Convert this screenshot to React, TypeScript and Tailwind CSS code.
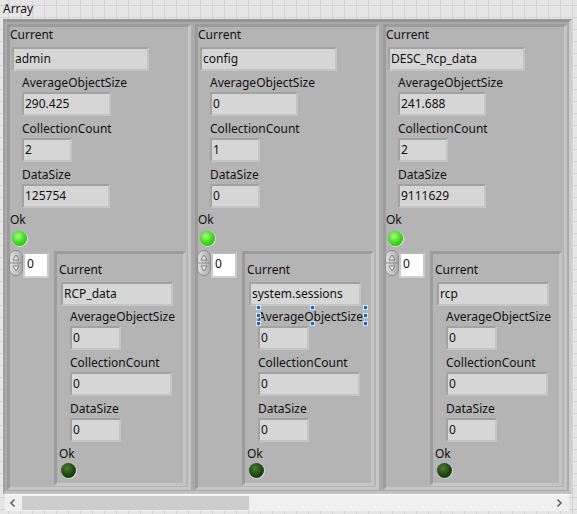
import React from "react";

type Item = { label: string; value: string; w: string };
type Col = {
  name: string;
  items: Item[];
  nested: { name: string; items: Item[] };
  selected?: boolean;
};

const cols: Col[] = [
  {
    name: "admin",
    items: [
      { label: "AverageObjectSize", value: "290.425", w: "w-[89px]" },
      { label: "CollectionCount", value: "2", w: "w-[50px]" },
      { label: "DataSize", value: "125754", w: "w-[88px]" },
    ],
    nested: {
      name: "RCP_data",
      items: [
        { label: "AverageObjectSize", value: "0", w: "w-[51px]" },
        { label: "CollectionCount", value: "0", w: "w-[102px]" },
        { label: "DataSize", value: "0", w: "w-[51px]" },
      ],
    },
  },
  {
    name: "config",
    items: [
      { label: "AverageObjectSize", value: "0", w: "w-[88px]" },
      { label: "CollectionCount", value: "1", w: "w-[50px]" },
      { label: "DataSize", value: "0", w: "w-[50px]" },
    ],
    nested: {
      name: "system.sessions",
      items: [
        { label: "AverageObjectSize", value: "0", w: "w-[51px]" },
        { label: "CollectionCount", value: "0", w: "w-[102px]" },
        { label: "DataSize", value: "0", w: "w-[51px]" },
      ],
    },
    selected: true,
  },
  {
    name: "DESC_Rcp_data",
    items: [
      { label: "AverageObjectSize", value: "241.688", w: "w-[88px]" },
      { label: "CollectionCount", value: "2", w: "w-[50px]" },
      { label: "DataSize", value: "9111629", w: "w-[88px]" },
    ],
    nested: {
      name: "rcp",
      items: [
        { label: "AverageObjectSize", value: "0", w: "w-[51px]" },
        { label: "CollectionCount", value: "0", w: "w-[102px]" },
        { label: "DataSize", value: "0", w: "w-[51px]" },
      ],
    },
  },
];

const fieldCls =
  "h-[24px] border-2 border-t-[#a2a2a2] border-l-[#a2a2a2] border-b-[#c4c4c4] border-r-[#c4c4c4] bg-[#d6d6d6] pl-[1px] text-[12px] leading-[20px] text-[#111] whitespace-nowrap overflow-hidden";

function Label({ text, className = "" }: { text: string; className?: string }) {
  return (
    <div className={`h-[16px] text-[12px] leading-[16px] text-[#111] whitespace-nowrap ${className}`}>
      {text}
    </div>
  );
}

function Handle({ className }: { className: string }) {
  return (
    <div
      className={`absolute w-[5px] h-[5px] bg-[#1162cc] border border-[#d8e8ff] ${className}`}
    />
  );
}

function Led({ on, className = "" }: { on: boolean; className?: string }) {
  return (
    <div
      className={`w-[17px] h-[17px] rounded-full p-[1px] bg-[linear-gradient(135deg,#9a9a9a,#f2f2f2)] ${className}`}
    >
      <div
        className={`w-full h-full rounded-full ${
          on
            ? "bg-[radial-gradient(circle_at_40%_35%,#a8ff86,#44e020_45%,#1f9a14)]"
            : "bg-[radial-gradient(circle_at_40%_35%,#4a7a34,#1f4512_55%,#0e2607)]"
        }`}
      />
    </div>
  );
}

function Stepper() {
  return (
    <svg width="14" height="26" viewBox="0 0 14 26" className="block">
      <defs>
        <linearGradient id="stg" x1="0" x2="1" y1="0" y2="0">
          <stop offset="0" stopColor="#e2e2e2" />
          <stop offset="1" stopColor="#a9a9a9" />
        </linearGradient>
      </defs>
      <rect x="0.5" y="0.5" width="13" height="25" rx="6.5" fill="url(#stg)" stroke="#8c8c8c" />
      <line x1="1" y1="13" x2="13" y2="13" stroke="#8c8c8c" />
      <path d="M7 5 L10 10 L4 10 Z" fill="#e8e8e8" stroke="#6f6f6f" strokeWidth="0.8" />
      <path d="M7 21 L10 16 L4 16 Z" fill="#e8e8e8" stroke="#6f6f6f" strokeWidth="0.8" />
    </svg>
  );
}

function Nested({ name, items, selected }: { name: string; items: Item[]; selected?: boolean }) {
  return (
    <div className="ml-[5px] mt-[1px] w-[132px] h-[235px] bg-[#b4b4b4] border-[3px] border-t-[#9c9c9c] border-l-[#9c9c9c] border-b-[#c6c6c6] border-r-[#c6c6c6] pt-[8px] pl-[2px] flex flex-col">
      <Label text="Current" />
      <div className={`${fieldCls} mt-[4px] ml-[2px] w-[112px] h-[24px]`}>{name}</div>
      {items.map((it, i) => (
        <div key={it.label} className={`ml-[11px] ${i === 0 ? "mt-[3px]" : "mt-[5px]"}`}>
          <div className="relative w-fit">
            <Label text={it.label} />
            {selected && i === 0 && (
              <>
                <Handle className="left-[-2px] top-[-4px]" />
                <Handle className="left-[52px] top-[-4px]" />
                <Handle className="right-[-5px] top-[-4px]" />
                <Handle className="left-[-2px] top-[4px]" />
                <Handle className="right-[-5px] top-[4px]" />
                <Handle className="left-[-2px] top-[12px]" />
                <Handle className="left-[52px] top-[12px]" />
                <Handle className="right-[-5px] top-[12px]" />
              </>
            )}
          </div>
          <div className={`${fieldCls} mt-[1px] ${it.w}`}>{it.value}</div>
        </div>
      ))}
      <Label text="Ok" className="mt-[4px]" />
      <Led on={false} className="ml-[1px]" />
    </div>
  );
}

function Column({ col }: { col: Col }) {
  return (
    <div className="w-[184px] h-[466px] bg-[#b4b4b4] border-[3px] border-t-[#9c9c9c] border-l-[#9c9c9c] border-b-[#c6c6c6] border-r-[#c6c6c6] flex flex-col">
      <Label text="Current" />
      <div className={`${fieldCls} mt-[4px] ml-[2px] w-[137px]`}>{col.name}</div>
      {col.items.map((it, i) => (
        <div key={it.label} className={`ml-[12px] ${i === 0 ? "mt-[4px]" : "mt-[5px]"}`}>
          <Label text={it.label} />
          <div className={`${fieldCls} mt-[1px] ${it.w}`}>{it.value}</div>
        </div>
      ))}
      <Label text="Ok" className="mt-[4px]" />
      <Led on className="mt-[2px] ml-[1px]" />
      <div className="mt-[3px] -ml-[1px] flex items-start">
        <Stepper />
        <div className="mt-[2px] w-[26px] h-[26px] border-[2px] border-t-[#b9b9b9] border-l-[#c9c9c9] border-r-[#c9c9c9] border-b-[#d0d0d0] bg-white pl-[2px] text-[12px] leading-[20px] text-[#111]">
          0
        </div>
        <Nested name={col.nested.name} items={col.nested.items} selected={col.selected} />
      </div>
    </div>
  );
}

export default function App() {
  return (
    <div className="w-[577px] h-[514px] overflow-hidden bg-[#e6e6e6] bg-[linear-gradient(to_right,#d3d3d3_1px,transparent_1px),linear-gradient(to_bottom,#d3d3d3_1px,transparent_1px)] bg-[size:12px_12px] bg-[position:8px_5px] font-['Noto_Sans',sans-serif]">
      <div className="h-[19px] pl-[3px] pt-[1px] text-[12px] leading-[16px] text-[#111]">Array</div>
      <div className="ml-[3px] w-[569px] h-[475px] bg-[#a9a9a9] border-t-[3px] border-l-[2px] border-r-[3px] border-b-[3px] border-t-[#959595] border-l-[#a0a0a0] border-r-[#cfcfcf] border-b-[#c2c2c2] pt-[2px] pl-[2px] flex gap-[4px]">
        {cols.map((c) => (
          <Column key={c.name} col={c} />
        ))}
      </div>
      <div className="ml-[5px] w-[564px] h-[17px] bg-[#f0f0f0] border-t border-white flex items-center">
        <svg width="16" height="16" viewBox="0 0 16 16" className="block">
          <path d="M9.5 4.5 L6 8 L9.5 11.5" fill="none" stroke="#606060" strokeWidth="1.6" />
        </svg>
        <div className="ml-[1px] w-[227px] h-[14px] bg-[#cdcdcd]" />
        <div className="flex-1" />
        <svg width="16" height="16" viewBox="0 0 16 16" className="block mr-[2px]">
          <path d="M6.5 4.5 L10 8 L6.5 11.5" fill="none" stroke="#606060" strokeWidth="1.6" />
        </svg>
      </div>
    </div>
  );
}
